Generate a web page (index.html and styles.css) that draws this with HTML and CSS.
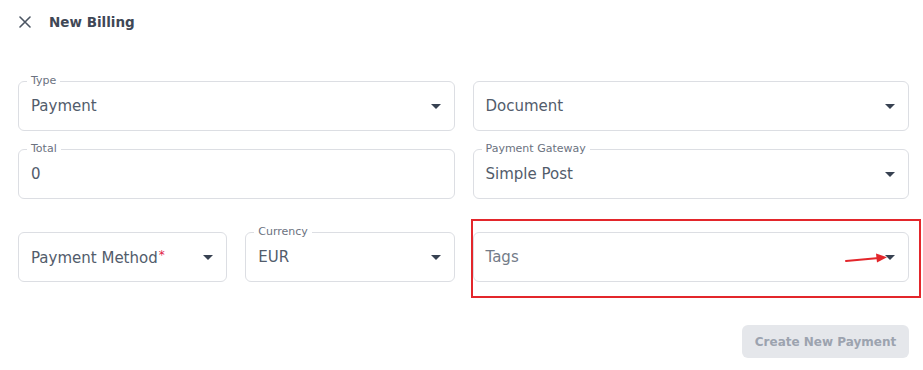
FILE: index.html
```html
<!DOCTYPE html>
<html lang="en">
<head>
    <meta charset="UTF-8" />
    <meta name="viewport" content="width=device-width, initial-scale=1.0" />
    <title>New Billing</title>
    <link rel="stylesheet" href="styles.css">
</head>
<body>
<div class="dialog">
    <header class="dialog-head">
        <button class="close-btn" aria-label="Close">
            <svg width="12" height="12" viewBox="0 0 12 12"><path d="M1 1 L11 11 M11 1 L1 11" stroke="#4b5563" stroke-width="1.6" stroke-linecap="round"/></svg>
        </button>
        <h1>New Billing</h1>
    </header>

    <form class="billing-form">
        <div class="row">
            <div class="field select">
                <span class="field-label">Type</span>
                <span class="value">Payment</span>
                <span class="caret"></span>
            </div>
            <div class="field select">
                <span class="value">Document</span>
                <span class="caret"></span>
            </div>
        </div>

        <div class="row">
            <div class="field">
                <span class="field-label">Total</span>
                <span class="value">0</span>
            </div>
            <div class="field select">
                <span class="field-label">Payment Gateway</span>
                <span class="value">Simple Post</span>
                <span class="caret"></span>
            </div>
        </div>

        <div class="row row-last">
            <div class="row-split">
                <div class="field select">
                    <span class="value">Payment Method<em class="req">*</em></span>
                    <span class="caret"></span>
                </div>
                <div class="field select">
                    <span class="field-label">Currency</span>
                    <span class="value">EUR</span>
                    <span class="caret"></span>
                </div>
            </div>
            <div class="field select highlighted">
                <span class="value muted">Tags</span>
                <span class="caret"></span>
                <span class="mark-box"></span>
                <svg class="mark-arrow" width="48" height="14" viewBox="0 0 48 14">
                    <path d="M1 9 L34 6" stroke="#e3262b" stroke-width="2" stroke-linecap="round"/>
                    <path d="M31 1.5 L42 5.2 L32 10.5 Z" fill="#e3262b"/>
                </svg>
            </div>
        </div>

        <div class="actions">
            <button type="button" class="btn-create" disabled>Create New Payment</button>
        </div>
    </form>
</div>
</body>
</html>
```

FILE: styles.css
```css
:root {
    --text: #4b5563;
    --muted: #6b7280;
    --line: #dcdee3;
    --radius: 6px;
}

* {
    box-sizing: border-box;
    margin: 0;
    padding: 0;
}

body {
    font-family: 'DejaVu Sans', 'Noto Sans', sans-serif;
    background: #fff;
    color: var(--text);
}

.dialog {
    padding: 0 14px 0 18px;
}

.dialog-head {
    display: flex;
    align-items: center;
    gap: 18px;
    height: 42px;
    padding-top: 1px;
}

.close-btn {
    border: none;
    background: none;
    width: 13px;
    height: 13px;
    display: flex;
    align-items: center;
    justify-content: center;
    cursor: pointer;
}

h1 {
    font-size: 13.5px;
    font-weight: 700;
    color: #3f4856;
}

.billing-form {
    padding-top: 39px;
}

.row {
    display: grid;
    grid-template-columns: 1fr 1fr;
    gap: 18px;
    margin-bottom: 18px;
}

.row-last {
    margin-top: 33px;
    margin-bottom: 0;
}

.row-split {
    display: grid;
    grid-template-columns: 1fr 1fr;
    gap: 18px;
}

.field {
    position: relative;
    height: 50px;
    border: 1px solid var(--line);
    border-radius: var(--radius);
    display: flex;
    align-items: center;
    padding: 0 13px 0 12px;
    background: #fff;
}

.field-label {
    position: absolute;
    top: -8px;
    left: 8px;
    padding: 0 4px;
    background: #fff;
    font-size: 11px;
    color: var(--muted);
}

.value {
    flex: 1;
    font-size: 15px;
    color: #525c6b;
    white-space: nowrap;
}

.value.muted {
    color: #737b88;
}

.req {
    font-style: normal;
    color: #e11d48;
    font-size: 12px;
    vertical-align: 4px;
    margin-left: 1px;
}

.caret {
    width: 0;
    height: 0;
    border-left: 5px solid transparent;
    border-right: 5px solid transparent;
    border-top: 5px solid #374151;
    margin-top: 1px;
}

.mark-box {
    position: absolute;
    top: -14px;
    left: -3px;
    right: -13px;
    bottom: -17px;
    border: 2px solid #e3262b;
    pointer-events: none;
}

.mark-arrow {
    position: absolute;
    left: 371px;
    top: 19px;
}

.actions {
    display: flex;
    justify-content: flex-end;
    margin-top: 43px;
}

.btn-create {
    width: 167px;
    height: 33px;
    border: none;
    border-radius: var(--radius);
    background: #e5e7eb;
    color: #9ca3af;
    font-family: inherit;
    font-size: 12px;
    font-weight: 700;
}
```
